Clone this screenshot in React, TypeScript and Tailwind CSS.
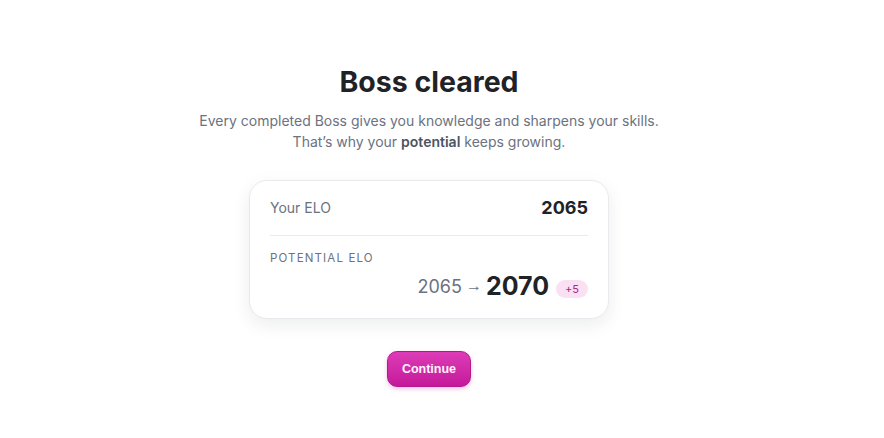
import React from "react";

export default function App() {
  return (
    <div className="min-h-screen w-full bg-white flex flex-col items-center pt-[64px] pr-[26px]" style={{ fontFamily: "Inter, 'Noto Sans', sans-serif" }}>
      <h1 className="text-[28.5px] leading-[36px] font-bold text-[#1f2328]">Boss cleared</h1>
      <p className="mt-[10px] text-[14px] leading-[21px] text-[#6b7280] text-center">
        Every completed Boss gives you knowledge and sharpens your skills.
        <br />
        That’s why your <span className="font-semibold text-[#4b5563]">potential</span> keeps growing.
      </p>
      <div className="mt-[28px] w-[360px] rounded-[18px] border border-[#e9eaee] bg-white px-[20px] pt-[14px] pb-[17px] shadow-[0_6px_18px_rgba(17,24,39,0.08)]">
        <div className="flex items-center justify-between h-[24px]">
          <span className="text-[14px] text-[#6b7280]">Your ELO</span>
          <span className="text-[18px] font-bold text-[#1f2328]">2065</span>
        </div>
        <div className="mt-[16px] h-px bg-[#e9eaee]" />
        <div className="mt-[15px] text-[11.5px] tracking-[0.1em] text-[#6b7280] uppercase leading-[14px]">Potential ELO</div>
        <div className="mt-[6px] flex items-center justify-end">
          <span className="text-[18px] text-[#6b7280]">2065</span>
          <span className="ml-[4px] text-[16px] text-[#6b7280]" style={{ fontFamily: "'Liberation Sans', Arial, sans-serif" }}>→</span>
          <span className="ml-[4px] text-[25px] font-bold text-[#1f2328] leading-[30px]">2070</span>
          <span className="ml-[7px] mt-[6px] rounded-full bg-[#fbe0f3] px-[9px] py-[2px] text-[11px] leading-[14px] text-[#9d2f7f]">+5</span>
        </div>
      </div>
      <button
        className="mt-[32px] h-[36px] w-[84px] rounded-[10px] border border-[#b8178c] bg-gradient-to-b from-[#dd3bb7] to-[#c4189a] text-[12.5px] font-bold text-[#fff5fc] shadow-[0_2px_4px_rgba(190,24,140,0.25)]"
        style={{ fontFamily: "'Liberation Sans', Arial, sans-serif" }}
      >
        Continue
      </button>
    </div>
  );
}
